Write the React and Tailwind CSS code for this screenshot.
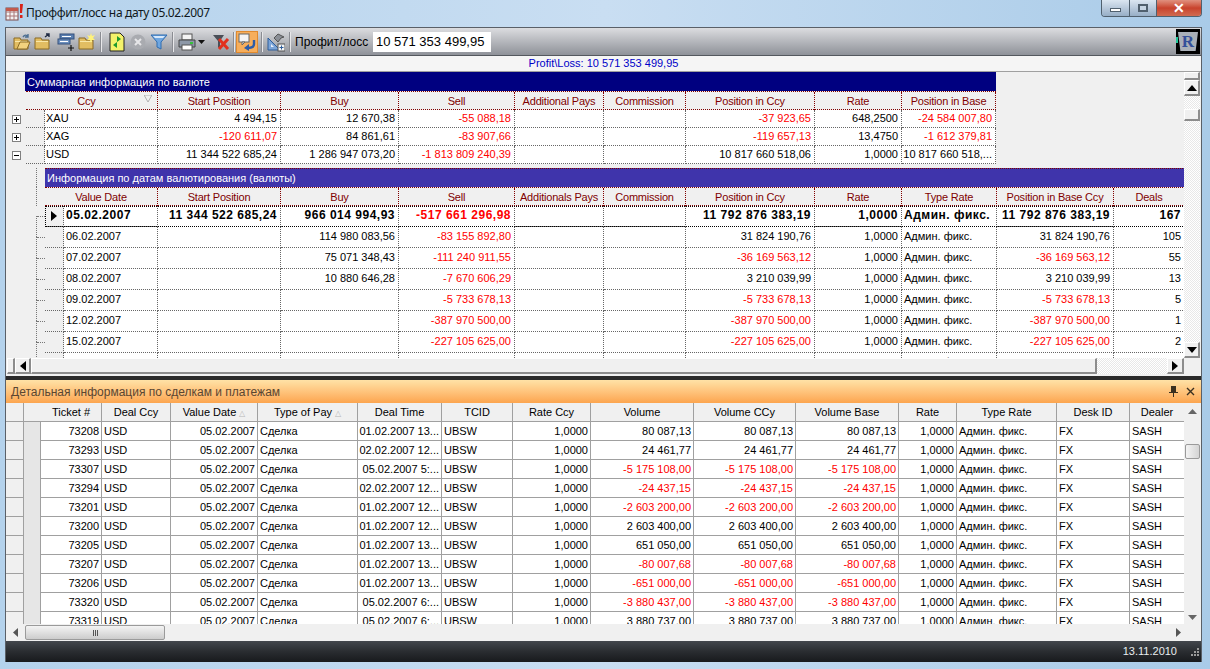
const summaryCols = "grid-cols-[19px_113px_123px_118px_116px_89px_82px_129px_87px_94px]";
const detailCols = "grid-cols-[19px_94px_123px_118px_116px_89px_82px_129px_87px_95px_117px_71px]";
const lowerCols = "grid-cols-[18px_17px_61px_69px_87px_100px_84px_71px_78px_103px_102px_103px_58px_100px_73px_54px]";

const summaryHead = ["Start Position", "Buy", "Sell", "Additional Pays", "Commission", "Position in Ccy", "Rate", "Position in Base"];
const summaryRows = [
  { ccy: "XAU", sign: "+", cells: ["4 494,15", "12 670,38", "-55 088,18", "", "", "-37 923,65", "648,2500", "-24 584 007,80"] },
  { ccy: "XAG", sign: "+", cells: ["-120 611,07", "84 861,61", "-83 907,66", "", "", "-119 657,13", "13,4750", "-1 612 379,81"] },
  { ccy: "USD", sign: "-", cells: ["11 344 522 685,24", "1 286 947 073,20", "-1 813 809 240,39", "", "", "10 817 660 518,06", "1,0000", "10 817 660 518,..."] },
];

const detailHead = ["Value Date", "Start Position", "Buy", "Sell", "Additionals Pays", "Commission", "Position in Ccy", "Rate", "Type Rate", "Position in Base Ccy", "Deals"];
const detailRows = [
  ["05.02.2007", "11 344 522 685,24", "966 014 994,93", "-517 661 296,98", "", "", "11 792 876 383,19", "1,0000", "Админ. фикс.", "11 792 876 383,19", "167"],
  ["06.02.2007", "", "114 980 083,56", "-83 155 892,80", "", "", "31 824 190,76", "1,0000", "Админ. фикс.", "31 824 190,76", "105"],
  ["07.02.2007", "", "75 071 348,43", "-111 240 911,55", "", "", "-36 169 563,12", "1,0000", "Админ. фикс.", "-36 169 563,12", "55"],
  ["08.02.2007", "", "10 880 646,28", "-7 670 606,29", "", "", "3 210 039,99", "1,0000", "Админ. фикс.", "3 210 039,99", "13"],
  ["09.02.2007", "", "", "-5 733 678,13", "", "", "-5 733 678,13", "1,0000", "Админ. фикс.", "-5 733 678,13", "5"],
  ["12.02.2007", "", "", "-387 970 500,00", "", "", "-387 970 500,00", "1,0000", "Админ. фикс.", "-387 970 500,00", "1"],
  ["15.02.2007", "", "", "-227 105 625,00", "", "", "-227 105 625,00", "1,0000", "Админ. фикс.", "-227 105 625,00", "2"],
  ["20.02.2007", "", "", "-7 500 000,00", "", "", "-7 500 000,00", "1,0000", "Админ. фикс.", "-7 500 000,00", "1"],
];

const lowerHead = ["Deal Ccy", "Value Date", "Type of Pay", "Deal Time", "TCID", "Rate Ccy", "Volume", "Volume CCy", "Volume Base", "Rate", "Type Rate", "Desk ID", "Dealer"];
const lowerRows = [
  ["73208", "01.02.2007 13...", "80 087,13"],
  ["73293", "02.02.2007 12...", "24 461,77"],
  ["73307", "05.02.2007 5:...", "-5 175 108,00"],
  ["73294", "02.02.2007 12...", "-24 437,15"],
  ["73201", "01.02.2007 12...", "-2 603 200,00"],
  ["73200", "01.02.2007 12...", "2 603 400,00"],
  ["73205", "01.02.2007 13...", "651 050,00"],
  ["73207", "01.02.2007 13...", "-80 007,68"],
  ["73206", "01.02.2007 13...", "-651 000,00"],
  ["73320", "05.02.2007 6:...", "-3 880 437,00"],
  ["73319", "05.02.2007 6:...", "3 880 737,00"],
];

const Folder = ({ children }) => (
  <svg width="18" height="18" viewBox="0 0 18 18">
    <path d="M1 5h6l1 2h7v9H1z" fill="#e2bd62" stroke="#8a6a24" />
    <path d="M2 8h12v1H2z" fill="#f8e7a8" />
    {children}
  </svg>
);

const Sep = ({ className }) => (
  <div className={`w-[2px] h-[20px] bg-[#e8e8ea] border-l border-[#8a8c92] ${className}`} />
);

function Tools() {
  return (
    <div className="flex items-center h-[24px]">
      <span className="ml-[6px]"><Folder><path d="M4 16l3-7h10l-3 7z" fill="#f2d27e" stroke="#8a6a24" /><path d="M10 4c2-3 4-2 5 0M15 1v3h-3" fill="none" stroke="#4a6d92" strokeWidth="1.4" /></Folder></span>
      <span className="ml-[3px]"><Folder><path d="M11 4l4-3M12 1h3v3" fill="none" stroke="#1f2a44" strokeWidth="1.4" /></Folder></span>
      <svg className="ml-[5px]" width="18" height="18" viewBox="0 0 18 18">
        <rect x="3" y="1" width="14" height="5" fill="#5b7fb0" stroke="#34507c" />
        <rect x="1" y="6" width="12" height="5" fill="#6d90be" stroke="#34507c" />
        <path d="M3 8.500h8M5 3.500h9" stroke="#fff" />
        <path d="M14 12v6M11 15h6" stroke="#111" strokeWidth="1.2" />
      </svg>
      <span className="ml-[3px]"><Folder><path d="M13 0l1 3 3-1-2 3 2 2-3 0-1 3-1-3-3 0 2-2-2-3 3 1z" fill="#fff27a" /></Folder></span>
      <Sep className="ml-[4px] mr-[6px]" />
      <svg width="18" height="20" viewBox="0 0 18 20">
        <path d="M2 1h10l4 4v14H2z" fill="#f4f26a" stroke="#222" />
        <path d="M9 4l4 3-4 3zM9 16l-4-3 4-3z" fill="#1f9a2d" />
      </svg>
      <svg className="ml-[3px]" width="18" height="18" viewBox="0 0 18 18">
        <circle cx="9" cy="9" r="7.500" fill="#a9abb0" />
        <path d="M6 6l6 6M12 6l-6 6" stroke="#e6e6e8" strokeWidth="2" />
      </svg>
      <svg className="ml-[3px]" width="18" height="18" viewBox="0 0 18 18">
        <path d="M1 2h16l-6 7v7l-4-2V9z" fill="#6ea6e0" stroke="#2f6cb0" />
        <path d="M3 3h12l-2 2H5z" fill="#d7e8fa" />
      </svg>
      <Sep className="ml-[4px] mr-[4px]" />
      <svg width="18" height="18" viewBox="0 0 18 18">
        <rect x="4" y="1" width="10" height="6" fill="#f4f4f4" stroke="#555" />
        <path d="M1 7h16v7H1z" fill="#8d98a8" stroke="#444" />
        <rect x="4" y="12" width="10" height="5" fill="#fff" stroke="#555" />
        <rect x="12" y="9" width="3" height="2" fill="#38c23c" />
      </svg>
      <svg className="ml-[2px]" width="7" height="4" viewBox="0 0 7 4"><path d="M0 0h7L3.500 4z" fill="#111" /></svg>
      <svg className="ml-[7px]" width="18" height="18" viewBox="0 0 18 18">
        <path d="M1 2h11L8 8v8l-2-2V8z" fill="#4a4f58" />
        <path d="M7 6l9 10M16 6L7 16" stroke="#e2301e" strokeWidth="3" />
      </svg>
      <Sep className="ml-[3px]" />
      <div className="ml-[1px] w-[22px] h-[22px] flex items-center justify-center bg-[#f6ae5c] border border-[#e08a2e]">
        <svg width="18" height="18" viewBox="0 0 18 18">
          <rect x="1" y="1" width="10" height="8" fill="#f4f4f4" stroke="#666" />
          <path d="M4 9v3l3-3z" fill="#f4f4f4" stroke="#666" />
          <path d="M16 7v4c0 3-3 4-6 4" fill="none" stroke="#2c5ca8" strokeWidth="2.400" />
          <path d="M11 11l-5 4 5 3z" fill="#2c5ca8" />
        </svg>
      </div>
      <Sep className="ml-[3px]" />
      <svg className="ml-[4px]" width="18" height="20" viewBox="0 0 18 20">
        <path d="M1 18V6l12 12z" fill="#7ba4d8" stroke="#2d5c9a" />
        <path d="M4 15v-3l3 3z" fill="#e8effa" />
        <path d="M7 6l4-4 6 3-3 1-3 4z" fill="#8b8f96" stroke="#555" />
        <rect x="11" y="12" width="7" height="7" fill="#f4f4f4" stroke="#555" />
        <path d="M14.500 13.500v4M12.500 15.500h4" stroke="#2d5c9a" />
      </svg>
      <Sep className="ml-[4px]" />
      <span className="ml-[4px] w-[78px] text-[12px] text-black whitespace-nowrap">Профит/лосс</span>
      <div className="w-[118px] h-[20px] bg-white text-[13px] leading-[20px] pl-[3px] text-black">10 571 353 499,95</div>
    </div>
  );
}

const Btn3d = ({ children, className }) => (
  <div className={`flex items-center justify-center bg-[#f0f0f0] border-t border-l border-white border-r-2 border-b-2 border-r-[#8c8c8c] border-b-[#8c8c8c] ${className}`}>
    {children}
  </div>
);

const Tri = ({ dir }) => {
  const d = { up: "M0 6L5 0l5 6z", down: "M0 0h10L5 6z", left: "M6 0v10L0 5z", right: "M0 0v10l6-5z" }[dir];
  const vert = dir === "up" || dir === "down";
  return (
    <svg width={vert ? 10 : 6} height={vert ? 6 : 10} viewBox={vert ? "0 0 10 6" : "0 0 6 10"}>
      <path d={d} fill="#000" />
    </svg>
  );
};

function SummaryTable() {
  return (
    <div>
      <div className="ml-[19px] w-[971px] h-[19px] bg-[#000080] text-white text-[11px] leading-[20px] pl-[2px]">Суммарная информация по валюте</div>
      <div className={`ml-[20px] w-[970px] h-[19px] grid ${summaryCols} text-[#800000] text-[11px] tracking-[-0.2px] leading-[18px] text-center border-y border-dotted border-[#800000]`}>
        <div className="col-span-2 relative border-r border-dotted border-[#800000] pr-[10px]">
          Ccy
          <svg className="absolute right-[5px] top-[3px]" width="8" height="8" viewBox="0 0 8 8"><path d="M0 0h8L4 7z" fill="none" stroke="#b0b0b0" /></svg>
        </div>
        {summaryHead.map((h) => (
          <div key={h} className="border-r border-dotted border-[#800000] whitespace-nowrap overflow-hidden">{h}</div>
        ))}
      </div>
      {summaryRows.map((r) => (
        <div key={r.ccy} className="flex h-[18px]">
          <div className="w-[20px] shrink-0 pl-[6px] pt-[5px]">
            <div className="w-[9px] h-[9px] border border-[#808080] bg-white flex items-center justify-center relative">
              <div className="w-[5px] h-px bg-black" />
              {r.sign === "+" && <div className="absolute w-px h-[5px] bg-black" />}
            </div>
          </div>
          <div className={`w-[970px] shrink-0 grid ${summaryCols} text-[11px] leading-[17px]`}>
            <div className="bg-[#f0f0f0] border-r border-b border-dotted border-[#666]" />
            <div className="bg-white pl-[1px] border-r border-b border-dotted border-[#666]">{r.ccy}</div>
            {r.cells.map((c, i) => (
              <div
                key={i}
                className={`bg-white pr-[3px] text-right whitespace-nowrap overflow-hidden border-r border-b border-dotted border-[#666] ${c.startsWith("-") ? "text-[#ff0000]" : "text-black"}`}
              >
                {c}
              </div>
            ))}
          </div>
        </div>
      ))}
    </div>
  );
}

function DetailTable() {
  return (
    <div className="mt-[4px]">
      <div className="flex">
        <div className="w-[39px] shrink-0"><div className="ml-[30px] h-full border-l border-dotted border-[#777]" /></div>
        <div className="w-[1140px] shrink-0 h-[19px] bg-[#3f34ab] text-white text-[11px] leading-[19px] pl-[2px] border-t border-dotted border-[#800000]">Информация по датам валютирования (валюты)</div>
      </div>
      <div className="flex">
        <div className="w-[39px] shrink-0"><div className="ml-[30px] h-full border-l border-dotted border-[#777]" /></div>
        <div className={`w-[1140px] shrink-0 h-[19px] grid ${detailCols} text-[#800000] text-[11px] tracking-[-0.2px] leading-[18px] text-center border-y border-dotted border-[#800000]`}>
          <div className="col-span-2 border-r border-dotted border-[#800000]">{detailHead[0]}</div>
          {detailHead.slice(1).map((h) => (
            <div key={h} className="border-r border-dotted border-[#800000] whitespace-nowrap overflow-hidden">{h}</div>
          ))}
        </div>
      </div>
      {detailRows.map((r, idx) => {
        const bold = idx === 0;
        return (
          <div key={r[0]} className="flex h-[21px]">
            <div className="w-[39px] shrink-0">
              <div className="ml-[30px] h-full border-l border-dotted border-[#777]">
                <div className="mt-[10px] border-t border-dotted border-[#777]" />
              </div>
            </div>
            <div className={`w-[1140px] shrink-0 grid ${detailCols} leading-[19px] ${bold ? "text-[12px] font-bold tracking-[0.5px] outline outline-1 outline-dotted -outline-offset-1 outline-black" : "text-[11px]"}`}>
              <div className="bg-[#f0f0f0] border-r border-b border-dotted border-[#666] flex items-center justify-center">
                {bold && <Tri dir="right" />}
              </div>
              <div className="bg-white pl-[2px] border-r border-b border-dotted border-[#666]">{r[0]}</div>
              {r.slice(1).map((c, i) => {
                const isType = i === 7;
                return (
                  <div
                    key={i}
                    className={`bg-white whitespace-nowrap overflow-hidden border-r border-b border-dotted border-[#666] ${isType ? "pl-[2px] text-left" : "pr-[3px] text-right"} ${c.startsWith("-") ? "text-[#ff0000]" : "text-black"}`}
                  >
                    {c}
                  </div>
                );
              })}
            </div>
          </div>
        );
      })}
    </div>
  );
}

function UpperScrollV() {
  return (
    <div className="w-[16px] h-full flex flex-col bg-[repeating-conic-gradient(#ffffff_0%_25%,#e8e8e8_0%_50%)] bg-[length:2px_2px]">
      <Btn3d className="h-[8px]" />
      <Btn3d className="h-[16px]"><Tri dir="up" /></Btn3d>
      <Btn3d className="h-[12px] mt-[13px]" />
      <div className="flex-1" />
      <Btn3d className="h-[16px]"><Tri dir="down" /></Btn3d>
    </div>
  );
}

function LowerGrid() {
  return (
    <div className="h-[221px] overflow-hidden">
      <div className={`grid ${lowerCols} h-[19px] text-[11px] leading-[18px] text-center text-black bg-[#f0f0f0] border-b border-[#a0a0a0]`}>
        <div className="border-r border-[#a0a0a0]" />
        <div className="col-span-2 pl-[17px] border-r border-[#a0a0a0]">Ticket #</div>
        {lowerHead.map((h, i) => (
          <div key={i} className="border-r border-[#a0a0a0] whitespace-nowrap overflow-hidden last:border-r-0">
            {h}
            {(h === "Value Date" || h === "Type of Pay") && <span className="text-[#b8b8b8] text-[8px] ml-[3px]">△</span>}
          </div>
        ))}
      </div>
      {lowerRows.map((r) => {
        const neg = r[2].startsWith("-");
        const vol = `text-right pr-[2px] border-r border-b border-[#a0a0a0] ${neg ? "text-[#ff0000]" : "text-black"}`;
        const num = "text-right pr-[2px] border-r border-b border-[#a0a0a0]";
        const txt = "pl-[2px] border-r border-b border-[#a0a0a0]";
        return (
          <div key={r[0]} className={`grid ${lowerCols} h-[19px] text-[11px] leading-[18px] text-black whitespace-nowrap`}>
            <div className="bg-[#f0f0f0] border-r border-b border-[#a0a0a0]" />
            <div className="bg-[#e6e6e6] border-r border-[#a0a0a0]" />
            <div className={`bg-white ${num}`}>{r[0]}</div>
            <div className={`bg-white ${txt}`}>USD</div>
            <div className={`bg-white ${num}`}>05.02.2007</div>
            <div className={`bg-white ${txt}`}>Сделка</div>
            <div className={`bg-white ${num}`}>{r[1]}</div>
            <div className={`bg-white ${txt}`}>UBSW</div>
            <div className={`bg-white ${num}`}>1,0000</div>
            <div className={`bg-white ${vol}`}>{r[2]}</div>
            <div className={`bg-white ${vol}`}>{r[2]}</div>
            <div className={`bg-white ${vol}`}>{r[2]}</div>
            <div className={`bg-white ${num}`}>1,0000</div>
            <div className={`bg-white ${txt}`}>Админ. фикс.</div>
            <div className={`bg-white ${txt}`}>FX</div>
            <div className="bg-white pl-[2px] border-b border-[#a0a0a0]">SASH</div>
          </div>
        );
      })}
    </div>
  );
}

export default function App() {
  return (
    <div className="w-[1210px] h-[669px] overflow-hidden flex flex-col bg-gradient-to-r from-[#b4d2ec] via-[#c9def2] to-[#a9cbe8] font-['Liberation_Sans',sans-serif]">
      {/* Title bar */}
      <div className="h-[27px] flex items-start justify-between pl-[5px] pr-[8px] shrink-0">
        <div className="flex items-center h-[25px]">
          <svg width="18" height="18" viewBox="0 0 18 18">
            <rect x="1" y="4" width="12" height="12" fill="#f3f3f3" stroke="#7a4a4a" />
            <path d="M1 8h12M1 12h12M5 4v12M9 4v12" stroke="#a77" />
            <rect x="1" y="4" width="12" height="3" fill="#c25a4c" />
            <path d="M15 0h3l-1 9h-2zM15 11h2.500v3H15z" fill="#d8231a" />
          </svg>
          <span className="ml-[3px] text-[12px] text-[#101820] font-['Noto_Sans',sans-serif] tracking-[-0.35px]">Проффит/лосс на дату 05.02.2007</span>
        </div>
        <div className="flex h-[17px] w-[101px] border border-t-0 border-[#50606e] rounded-b-[4px] overflow-hidden">
          <div className="w-[28px] flex items-center justify-center bg-gradient-to-b from-[#dbe6f1] to-[#97aec6] border-r border-[#50606e]">
            <div className="w-[11px] h-[4px] bg-white border border-[#50606e] mt-[3px]" />
          </div>
          <div className="w-[27px] flex items-center justify-center bg-gradient-to-b from-[#dbe6f1] to-[#97aec6] border-r border-[#50606e]">
            <div className="w-[10px] h-[8px] bg-[#c6d5e4] border-2 border-[#50606e]" />
          </div>
          <div className="flex-1 flex items-center justify-center bg-gradient-to-b from-[#e0907e] via-[#c8422c] to-[#d06a50] text-white text-[14px] font-bold leading-none">✕</div>
        </div>
      </div>

      {/* Window body */}
      <div className="ml-[5px] w-[1197px] h-[635px] flex flex-col shrink-0 bg-[#f0f0f0] border-t border-x border-[#5a6068]">
        <div className="h-[28px] px-[1px] flex items-center justify-between bg-gradient-to-b from-[#dcdde0] to-[#8f9299] border-b border-[#54585e] shrink-0">
          <Tools />
          <div className="w-[24px] h-[25px] bg-black flex items-center justify-center relative">
            <div className="absolute left-0 top-[8px] w-[2px] h-[6px] bg-[#1fc89a]" />
            <div className="w-[20px] h-[19px] bg-[#aab0b8] text-[#34509a] text-[17px] font-bold leading-[19px] text-center font-['Liberation_Serif',serif] [clip-path:polygon(0_0,100%_0,88%_100%,12%_100%)]">R</div>
          </div>
        </div>

        <div className="h-[16px] bg-[#f5f5f5] border-b border-[#a0a0a0] text-center text-[#0000c8] text-[11px] leading-[15px] shrink-0">Profit\Loss: 10 571 353 499,95</div>

        {/* Upper grids */}
        <div className="h-[302px] flex flex-col shrink-0">
          <div className="h-[286px] flex">
            <div className="w-[1178px] shrink-0 overflow-hidden"><SummaryTable /><DetailTable /></div>
            <UpperScrollV />
          </div>
          <div className="h-[16px] flex ml-[1px]">
            <Btn3d className="w-[8px]" />
            <Btn3d className="w-[16px]"><Tri dir="left" /></Btn3d>
            <Btn3d className="w-[1066px]" />
            <div className="flex-1 bg-[repeating-conic-gradient(#ffffff_0%_25%,#e8e8e8_0%_50%)] bg-[length:2px_2px]" />
            <Btn3d className="w-[17px] mr-[17px]"><Tri dir="right" /></Btn3d>
          </div>
        </div>

        <div className="h-[6px] border-t-[2px] border-[#f0f0f0] bg-[#2a2a2a] shrink-0" />

        {/* Detail panel */}
        <div className="h-[23px] px-[5px] flex items-center justify-between bg-gradient-to-b from-[#ffe2a6] to-[#fca54e] shrink-0">
          <span className="text-[12px] text-[#5a4632]">Детальная информация по сделкам и платежам</span>
          <div className="flex items-center gap-[8px] pr-[1px]">
            <svg width="9" height="11" viewBox="0 0 9 11"><path d="M2 0h5v6h2v1H5v4H4V7H0V6h2z" fill="#3a3020" /></svg>
            <svg width="9" height="9" viewBox="0 0 9 9"><path d="M1 1l7 7M8 1L1 8" stroke="#3a3020" strokeWidth="1.400" /></svg>
          </div>
        </div>

        <div className="flex shrink-0">
          <div className="w-[1178px]"><LowerGrid /></div>
          <div className="w-[17px] flex flex-col items-center bg-[#f0f0f0]">
            <div className="h-[17px] flex items-center"><svg width="9" height="5" viewBox="0 0 9 5"><path d="M0 5L4.500 0 9 5z" fill="#666" /></svg></div>
            <div className="w-[15px] h-[15px] mt-[24px] bg-gradient-to-r from-[#f4f4f4] to-[#d4d4d4] border border-[#9a9a9a] rounded-[2px]" />
            <div className="flex-1" />
            <div className="h-[13px] flex items-center"><svg width="9" height="5" viewBox="0 0 9 5"><path d="M0 0h9L4.500 5z" fill="#666" /></svg></div>
          </div>
        </div>

        <div className="h-[17px] flex items-center bg-[#f0f0f0] shrink-0">
          <div className="w-[19px] flex justify-center"><svg width="5" height="9" viewBox="0 0 5 9"><path d="M5 0v9L0 4.500z" fill="#555" /></svg></div>
          <div className="w-[140px] h-[15px] bg-gradient-to-b from-[#f4f4f4] to-[#cccccc] border border-[#9a9a9a] rounded-[2px] flex items-center justify-center gap-[1px]">
            <div className="w-px h-[6px] bg-[#555]" /><div className="w-px h-[6px] bg-[#555]" /><div className="w-px h-[6px] bg-[#555]" />
          </div>
          <div className="flex-1" />
          <div className="mr-[20px]"><svg width="5" height="9" viewBox="0 0 5 9"><path d="M0 0v9l5-4.500z" fill="#555" /></svg></div>
        </div>

        <div className="flex-1 flex items-center justify-end pr-[1px] bg-gradient-to-b from-[#43474d] via-[#2a2d31] to-[#181a1d]">
          <span className="text-[11px] text-[#e8ecf0] mr-[13px]">13.11.2010</span>
          <svg width="10" height="10" viewBox="0 0 10 10" fill="#9a9a9a">
            <rect x="7" y="1" width="2" height="2" /><rect x="4" y="4" width="2" height="2" /><rect x="7" y="4" width="2" height="2" />
            <rect x="1" y="7" width="2" height="2" /><rect x="4" y="7" width="2" height="2" /><rect x="7" y="7" width="2" height="2" />
          </svg>
        </div>
      </div>
    </div>
  );
}
